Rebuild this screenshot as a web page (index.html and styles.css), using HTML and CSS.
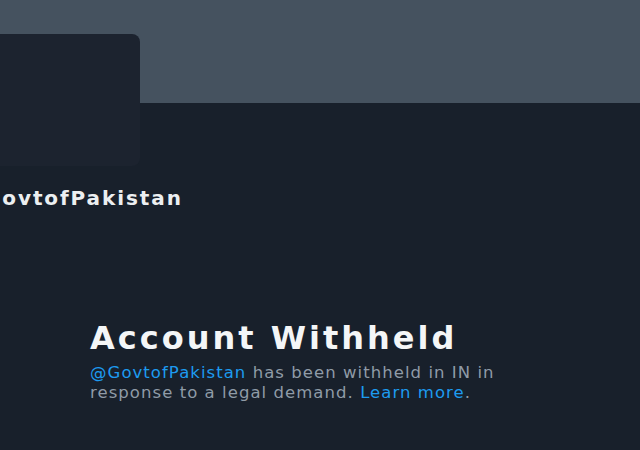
FILE: index.html
```html
<!DOCTYPE html>
<html>
<head>
<meta charset="utf-8">
<link rel="stylesheet" href="styles.css">
</head>
<body>
<div class="page">
  <div class="banner"></div>
  <div class="profile">
    <div class="avatar"></div>
    <div class="name">GovtofPakistan</div>
  </div>
  <div class="withheld">
    <h1 class="title">Account Withheld</h1>
    <p class="desc"><span class="link">@GovtofPakistan</span> has been withheld in IN in response to a legal demand. <span class="link">Learn more</span>.</p>
  </div>
</div>
</body>
</html>
```
FILE: styles.css
```css
html, body {
  margin: 0;
  padding: 0;
  background: #18202b;
}
.page {
  width: 640px;
  height: 450px;
  overflow: hidden;
  background: #18202b;
  font-family: "DejaVu Sans", sans-serif;
}
.banner {
  height: 103px;
  background: #45525f;
}
.profile {
  margin-top: -69px;
  margin-left: -20px;
  display: flex;
  flex-direction: column;
}
.avatar {
  width: 160px;
  height: 132px;
  background: #1c232f;
  border-radius: 0 8px 8px 0;
}
.name {
  margin-top: 20px;
  margin-left: 4px;
  font-size: 20px;
  font-weight: bold;
  letter-spacing: 1.9px;
  color: #eceff1;
  line-height: 24px;
  white-space: nowrap;
}
.withheld {
  margin-top: 109px;
  margin-left: 90px;
  width: 440px;
}
.title {
  margin: 0;
  font-size: 32px;
  font-weight: bold;
  letter-spacing: 3px;
  color: #f4f6f7;
  line-height: 38px;
  white-space: nowrap;
}
.desc {
  margin: 6px 0 0;
  font-size: 16.5px;
  letter-spacing: 1.05px;
  line-height: 20px;
  color: #8f9ba7;
  width: 420px;
}
.link {
  color: #1d9bf0;
}
```
